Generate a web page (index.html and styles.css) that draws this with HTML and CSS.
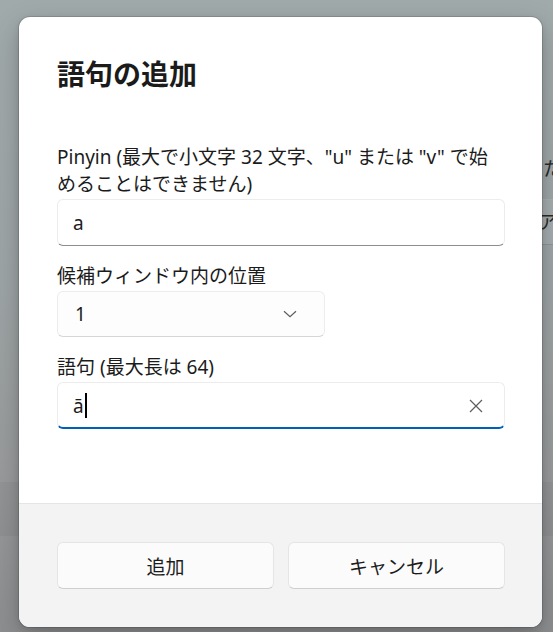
FILE: index.html
```html
<!DOCTYPE html>
<html lang="ja">
<head>
<meta charset="utf-8">
<link rel="stylesheet" href="styles.css">
</head>
<body>
<div class="app">
  <div class="app-right">
    <div class="app-text">または</div>
    <div class="app-field">アルファベット</div>
  </div>
  <div class="app-band"></div>
</div>

<div class="dialog" role="dialog">
  <div class="dialog-body">
    <h1 class="title">語句の追加</h1>
    <div class="fields">
      <div class="field">
        <label class="label">Pinyin (最大で小文字 32 文字、"u" または "v" で始めることはできません)</label>
        <div class="textbox"><span class="value">a</span></div>
      </div>
      <div class="field">
        <label class="label">候補ウィンドウ内の位置</label>
        <div class="combo">
          <span class="value">1</span>
          <svg class="chevron" width="14" height="8" viewBox="0 0 14 8"><path d="M1 1.2 L7 6.8 L13 1.2" fill="none" stroke="#5d5d5d" stroke-width="1.2"/></svg>
        </div>
      </div>
      <div class="field">
        <label class="label">語句 (最大長は 64)</label>
        <div class="textbox focused">
          <span class="value">ā</span><span class="caret"></span>
          <svg class="clear" width="14" height="14" viewBox="0 0 14 14"><path d="M1 1 L13 13 M13 1 L1 13" fill="none" stroke="#5d5d5d" stroke-width="1.2"/></svg>
        </div>
      </div>
    </div>
  </div>
  <div class="dialog-footer">
    <button class="btn">追加</button>
    <button class="btn">キャンセル</button>
  </div>
</div>
</body>
</html>
```

FILE: styles.css
```css
html, body {
  margin: 0;
  padding: 0;
}
body {
  width: 553px;
  height: 632px;
  overflow: hidden;
  position: relative;
  font-family: "Noto Sans", "Noto Sans CJK JP", sans-serif;
  background: linear-gradient(180deg, #a1aaab 0%, #9ea5a6 45%, #999b9c 75%, #8d8e8f 100%);
  color: #1b1b1b;
}

/* dimmed application behind the dialog */
.app {
  height: 632px;
  display: flex;
  flex-direction: column;
}
.app-right {
  padding-top: 155px;
  padding-left: 524px;
  font-size: 19px;
  color: #2a2c2c;
}
.app-text {
  line-height: 28px;
  white-space: nowrap;
}
.app-field {
  margin-top: 16px;
  height: 44px;
  line-height: 44px;
  padding-left: 14px;
  white-space: nowrap;
  background: #a5adae;
  border-top: 1px solid #a9b1b2;
  border-bottom: 1px solid #8f9697;
}
.app-band {
  margin-top: 237px;
  height: 54px;
  background: rgba(0, 0, 0, 0.035);
}

/* dialog */
.dialog {
  position: absolute;
  left: 19px;
  top: 17px;
  width: 523px;
  height: 610px;
  box-sizing: border-box;
  display: flex;
  flex-direction: column;
  background: #ffffff;
  border-radius: 11px;
  overflow: hidden;
  box-shadow: 0 0 0 1px rgba(0, 0, 0, 0.12), 0 10px 28px rgba(0, 0, 0, 0.22), 0 2px 6px rgba(0, 0, 0, 0.12);
}
.dialog-body {
  flex: 1;
  padding: 38px 37px 0 38px;
}
.title {
  margin: 0;
  font-size: 28px;
  line-height: 38px;
  font-weight: 600;
  color: #1b1b1b;
}
.fields {
  margin-top: 51px;
  display: flex;
  flex-direction: column;
  gap: 17px;
}
.field {
  display: flex;
  flex-direction: column;
}
.label {
  font-size: 19px;
  line-height: 27px;
  margin-bottom: 1px;
  color: #1b1b1b;
}
.textbox, .combo {
  box-sizing: border-box;
  height: 47px;
  display: flex;
  align-items: center;
  padding: 0 16px 0 15px;
  border: 1px solid #ececec;
  border-bottom: 1px solid #8d8d8d;
  border-radius: 6px;
  background: #ffffff;
  font-size: 19px;
}
.textbox.focused {
  border-bottom: 2px solid #005fb8;
  padding-top: 1px;
}
.value {
  line-height: 26px;
}
.caret {
  display: inline-block;
  width: 2px;
  height: 25px;
  background: #000;
  margin-left: 1px;
}
.clear {
  margin-left: auto;
  margin-right: 5px;
}
.combo {
  width: 268px;
  height: 46px;
  padding-left: 17px;
  background: #fdfdfd;
  border-bottom-color: #d6d6d6;
}
.chevron {
  margin-left: auto;
  margin-right: 11px;
}

.dialog-footer {
  height: 124px;
  box-sizing: border-box;
  border-top: 1px solid #e5e5e5;
  background: #f3f3f3;
  padding: 38px 37px 0 38px;
  display: grid;
  grid-template-columns: 1fr 1fr;
  gap: 14px;
  align-items: start;
}
.btn {
  height: 47px;
  font-family: inherit;
  font-size: 19px;
  color: #1b1b1b;
  background: #fbfbfb;
  border: 1px solid #e5e5e5;
  border-bottom-color: #cfcfcf;
  border-radius: 6px;
  padding: 0;
}
```
